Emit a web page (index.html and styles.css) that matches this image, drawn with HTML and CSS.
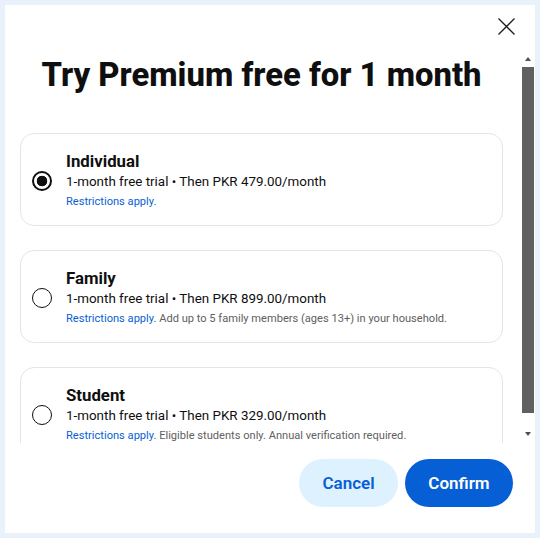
FILE: index.html
```html
<!DOCTYPE html>
<html lang="en">
<head>
  <meta charset="UTF-8">
  <title>Try Premium</title>
  <link rel="stylesheet" href="styles.css">
</head>
<body>

  <div class="dialog">
    <div class="dialog_head">
      <button class="close_btn" aria-label="Close">
        <svg width="17" height="17" viewBox="0 0 17 17">
          <path d="M0.5 0.5 L16.5 16.5 M16.5 0.5 L0.5 16.5" stroke="#1a1a1a" stroke-width="1.3" fill="none"/>
        </svg>
      </button>
    </div>

    <div class="dialog_body">
      <div class="scroll_area">
        <h1 class="title">Try Premium free for 1 month</h1>

        <div class="plans">
          <label class="plan">
            <span class="radio radio-on"></span>
            <span class="plan_text">
              <span class="plan_name">Individual</span>
              <span class="plan_price">1-month free trial • Then PKR 479.00/month</span>
              <span class="plan_note"><a href="#">Restrictions apply.</a></span>
            </span>
          </label>

          <label class="plan">
            <span class="radio"></span>
            <span class="plan_text">
              <span class="plan_name">Family</span>
              <span class="plan_price">1-month free trial • Then PKR 899.00/month</span>
              <span class="plan_note"><a href="#">Restrictions apply.</a> Add up to 5 family members (ages 13+) in your household.</span>
            </span>
          </label>

          <label class="plan">
            <span class="radio"></span>
            <span class="plan_text">
              <span class="plan_name">Student</span>
              <span class="plan_price">1-month free trial • Then PKR 329.00/month</span>
              <span class="plan_note"><a href="#">Restrictions apply.</a> Eligible students only. Annual verification required.</span>
            </span>
          </label>
        </div>
      </div>

      <div class="scrollbar">
        <div class="sb_btn"><span class="arrow_up"></span></div>
        <div class="sb_thumb"></div>
        <div class="sb_space"></div>
        <div class="sb_btn sb_btn-down"><span class="arrow_down"></span></div>
      </div>
    </div>

    <div class="dialog_foot">
      <button class="pill pill-light">Cancel</button>
      <button class="pill pill-blue">Confirm</button>
    </div>
  </div>

</body>
</html>
```

FILE: styles.css
```css
body {
  margin: 0;
  background: #e9f2fa;
  font-family: Roboto, "Liberation Sans", sans-serif;
  color: #0f0f0f;
}

.dialog {
  width: 530px;
  height: 528px;
  margin: 5px;
  background: #fff;
  display: flex;
  flex-direction: column;
}

.dialog_head {
  height: 47px;
  display: flex;
  justify-content: flex-end;
  align-items: flex-start;
  padding-right: 20px;
  box-sizing: border-box;
}

.close_btn {
  margin-top: 13px;
  padding: 0;
  border: none;
  background: none;
  width: 17px;
  height: 17px;
  cursor: pointer;
}

.close_btn svg {
  display: block;
}

.dialog_body {
  display: flex;
  height: 391px;
}

.scroll_area {
  flex: 1;
  overflow: hidden;
  padding: 0 19px 0 15px;
}

.title {
  margin: 3px 0 38px;
  font-size: 32.8px;
  line-height: 40px;
  font-weight: 800;
  text-align: center;
  letter-spacing: 0;
}

.plans {
  display: flex;
  flex-direction: column;
  gap: 24px;
}

.plan {
  display: flex;
  align-items: center;
  gap: 14px;
  height: 93px;
  box-sizing: border-box;
  padding: 2px 10px 0 11px;
  border: 1px solid #e5e5e5;
  border-radius: 14px;
  flex-shrink: 0;
  cursor: pointer;
}

.radio {
  width: 20px;
  height: 20px;
  box-sizing: border-box;
  border: 1.5px solid #0f0f0f;
  border-radius: 50%;
  flex-shrink: 0;
}

.radio-on {
  border-width: 2px;
  background: radial-gradient(circle, #0f0f0f 0 5px, #fff 5.6px);
}

.plan_text {
  display: flex;
  flex-direction: column;
}

.plan_name {
  font-size: 16.8px;
  line-height: 21px;
  font-weight: 700;
}

.plan_price {
  font-size: 13.4px;
  line-height: 20px;
  color: #0f0f0f;
}

.plan_note {
  margin-top: 2px;
  font-size: 11.1px;
  line-height: 16px;
  color: #606060;
}

.plan_note a {
  color: #065fd4;
  text-decoration: none;
}

.scrollbar {
  width: 13px;
  display: flex;
  flex-direction: column;
}

.sb_btn {
  height: 14px;
  width: 12px;
  display: flex;
  align-items: center;
  justify-content: center;
}

.sb_btn-down {
  margin-bottom: 2px;
}

.arrow_up {
  border-left: 3.5px solid transparent;
  border-right: 3.5px solid transparent;
  border-bottom: 4px solid #505050;
}

.arrow_down {
  border-left: 3.5px solid transparent;
  border-right: 3.5px solid transparent;
  border-top: 4px solid #505050;
}

.sb_thumb {
  width: 12px;
  height: 346px;
  margin-top: 1px;
  background: #606060;
}

.sb_space {
  flex: 1;
}

.dialog_foot {
  display: flex;
  justify-content: flex-end;
  gap: 7px;
  padding: 16px 22px 26px;
}

.pill {
  height: 48px;
  border: none;
  border-radius: 24px;
  font-family: Roboto, "Liberation Sans", sans-serif;
  font-size: 17px;
  font-weight: 600;
  cursor: pointer;
}

.pill-light {
  width: 99px;
  background: #def1ff;
  color: #065fd4;
}

.pill-blue {
  width: 108px;
  background: #065fd4;
  color: #fff;
}
```
